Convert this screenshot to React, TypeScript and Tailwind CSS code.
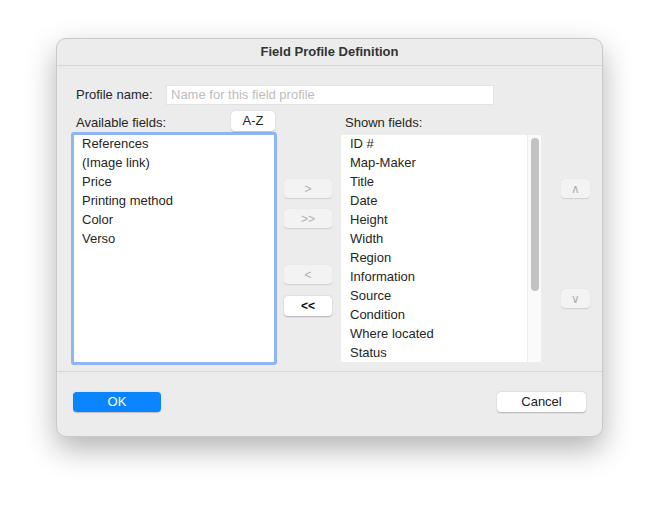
export default function App() {
  const left = ["References", "(Image link)", "Price", "Printing method", "Color", "Verso"];
  const right = ["ID #", "Map-Maker", "Title", "Date", "Height", "Width", "Region", "Information", "Source", "Condition", "Where located", "Status"];
  const sbtn = "h-[19px] w-[48px] rounded-[4px] bg-[#f3f3f3] text-[#b0b0b0] text-[12px] flex items-center justify-center shadow-[0_0.5px_1px_rgba(0,0,0,0.12)]";
  return (
    <div className="w-[659px] h-[512px] bg-white pt-[38px] pl-[56px]" style={{ fontFamily: '"Liberation Sans", Arial, sans-serif' }}>
      <div className="w-[547px] h-[399px] bg-[#ececec] rounded-[10px] border border-[#c9c9c9] shadow-[0_12px_30px_rgba(0,0,0,0.3)] flex flex-col overflow-hidden text-[13px] text-[#262626]">
        <div className="h-[27px] shrink-0 border-b border-[#d6d6d6] flex items-center justify-center font-bold text-[13px] text-[#333]">Field Profile Definition</div>
        <div className="flex items-center mt-[19px] h-[20px] pl-[19px]">
          <span className="w-[90px]">Profile name:</span>
          <div className="w-[328px] h-[20px] bg-white border border-[#e2e2e2] flex items-center px-[4px] text-[#bdbdbd]">Name for this field profile</div>
        </div>
        <div className="flex items-start mt-[6px] pl-[14px]">
          <div className="w-[206px]">
            <div className="h-[21px] flex items-start">
              <span className="pl-[5px] pt-[4px] w-[160px] leading-[15px]">Available fields:</span>
              <div className="w-[44px] h-[20px] bg-white rounded-[4px] flex items-center justify-center shadow-[0_0.5px_1.5px_rgba(0,0,0,0.2)]">A-Z</div>
            </div>
            <div className="h-[233px] bg-white border-[3px] border-[#8fb5f5] rounded-[3px] pl-[8px]">
              {left.map(t => <div key={t} className="h-[19px] leading-[17px]">{t}</div>)}
            </div>
          </div>
          <div className="ml-[7px] w-[48px] pt-[68px] flex flex-col">
            <div className={sbtn}>&gt;</div>
            <div className={sbtn + " mt-[11px]"}>&gt;&gt;</div>
            <div className={sbtn + " mt-[37px]"}>&lt;</div>
            <div className="h-[20px] w-[48px] mt-[12px] rounded-[4px] bg-white text-[#111] font-bold text-[12px] flex items-center justify-center shadow-[0_0.5px_1.5px_rgba(0,0,0,0.25)]">&lt;&lt;</div>
          </div>
          <div className="ml-[9px] w-[200px]">
            <div className="h-[24px] pl-[4px] pt-[4px] leading-[15px]">Shown fields:</div>
            <div className="h-[227px] bg-white flex">
              <div className="flex-1 pl-[9px] overflow-hidden">
                {right.map(t => <div key={t} className="h-[19px] leading-[17px]">{t}</div>)}
              </div>
              <div className="w-[14px] bg-[#fafafa] border-l border-[#ececec] pt-[3px] flex justify-center">
                <div className="w-[8px] h-[153px] rounded-full bg-[#c2c2c2]"></div>
              </div>
            </div>
          </div>
          <div className="ml-[20px] w-[29px] pt-[68px] flex flex-col">
            <div className={sbtn + " !w-[29px] text-[11px]"}>∧</div>
            <div className={sbtn + " !w-[29px] mt-[91px] text-[11px]"}>∨</div>
          </div>
        </div>
        <div className="mt-[6px] border-t border-[#d6d6d6]"></div>
        <div className="flex justify-between items-center mt-[20px] px-[16px]">
          <div className="w-[88px] h-[20px] rounded-[4px] bg-[#0a84ff] text-white flex items-center justify-center shadow-[0_0.5px_1px_rgba(0,0,0,0.2)]">OK</div>
          <div className="w-[89px] h-[20px] rounded-[4px] bg-white text-[#222] flex items-center justify-center shadow-[0_0.5px_1.5px_rgba(0,0,0,0.25)]">Cancel</div>
        </div>
      </div>
    </div>
  );
}
